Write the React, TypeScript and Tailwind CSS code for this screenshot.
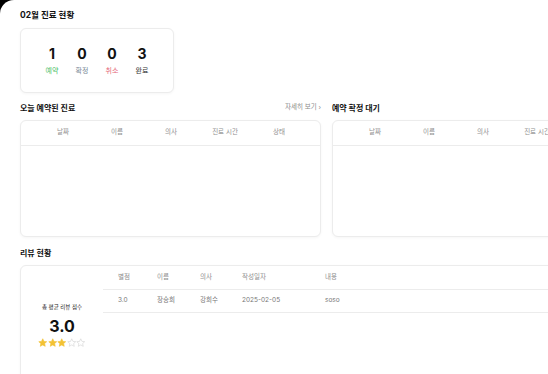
import React from 'react';

const font = { fontFamily: 'Inter, "Noto Sans CJK KR", sans-serif' };

const stats = [
  { value: 1, label: '예약', color: 'text-[#4fbf6b]' },
  { value: 0, label: '확정', color: 'text-[#7b8a98]' },
  { value: 0, label: '취소', color: 'text-[#e5687a]' },
  { value: 3, label: '완료', color: 'text-[#333333]' },
];

const Star: React.FC<{ filled: boolean }> = ({ filled }) => (
  <svg width="9.5" height="9.5" viewBox="0 0 24 24">
    <polygon
      points="12,2 15.1,8.6 22,9.3 16.8,14 18.2,21 12,17.5 5.8,21 7.2,14 2,9.3 8.9,8.6"
      fill={filled ? '#f3c234' : 'none'}
      stroke={filled ? '#f3c234' : '#d4d4d4'}
      strokeWidth="1.6"
      strokeLinejoin="round"
    />
  </svg>
);

const ScheduleCard: React.FC<{ columns: string[] }> = ({ columns }) => (
  <div className="h-[117px] rounded-[6px] border border-[#ececec] bg-white shadow-[0_1px_3px_rgba(0,0,0,0.04)]">
    <div className="flex h-[25px] items-center border-b border-[#ececec] pl-[15px] pr-[16px]">
      {columns.map((c) => (
        <div key={c} className="w-[54px] shrink-0 text-center text-[6.5px] text-[#8f8f8f]">
          {c}
        </div>
      ))}
    </div>
  </div>
);

const reviewCols = [
  { label: '별점', w: 'w-[39px]' },
  { label: '이름', w: 'w-[43px]' },
  { label: '의사', w: 'w-[42px]' },
  { label: '작성일자', w: 'w-[83px]' },
  { label: '내용', w: 'flex-1' },
];

const reviewRow = ['3.0', '장승희', '강희수', '2025-02-05', 'soso'];

export default function App() {
  return (
    <div className="h-[374px] w-[548px] overflow-hidden bg-black" style={font}>
      <div className="h-full w-[660px] rounded-tl-[14px] bg-white pl-[20px] pt-[9px] text-[#111]">
        <h2 className="text-[8.5px] font-bold leading-[13px]">02월 진료 현황</h2>

        <div className="mt-[6px] flex h-[65px] w-[154px] items-center justify-center rounded-[6px] border border-[#ececec] bg-white shadow-[0_1px_3px_rgba(0,0,0,0.04)]">
          {stats.map((s) => (
            <div key={s.label} className="flex w-[30px] flex-col items-center">
              <span className="text-[14px] font-bold leading-[16px] text-[#111]">{s.value}</span>
              <span className={`mt-[4px] text-[7px] leading-[10px] ${s.color}`}>{s.label}</span>
            </div>
          ))}
        </div>

        <div className="mt-[9px] flex gap-[11px]">
          <div className="w-[301px]">
            <div className="mb-[6px] flex h-[12px] items-center justify-between">
              <h3 className="text-[8px] font-bold">오늘 예약된 진료</h3>
              <span className="text-[6.5px] text-[#8a8a8a]">자세히 보기 ›</span>
            </div>
            <ScheduleCard columns={['날짜', '이름', '의사', '진료 시간', '상태']} />
          </div>
          <div className="w-[301px]">
            <div className="mb-[6px] flex h-[12px] items-center">
              <h3 className="text-[8px] font-bold">예약 확정 대기</h3>
            </div>
            <ScheduleCard columns={['날짜', '이름', '의사', '진료 시간', '상태']} />
          </div>
        </div>

        <h3 className="mt-[10px] flex h-[12px] items-center text-[8px] font-bold">리뷰 현황</h3>
        <div className="mt-[6px] flex h-[120px] w-[613px] rounded-[6px] border border-[#ececec] bg-white shadow-[0_1px_3px_rgba(0,0,0,0.04)]">
          <div className="flex w-[82px] shrink-0 flex-col items-center justify-center">
            <span className="text-[5.5px] leading-[8px] text-[#222]">총 평균 리뷰 점수</span>
            <span className="mt-[6px] text-[16px] font-bold leading-[18px] text-[#111]">3.0</span>
            <div className="mt-[3px] flex">
              {[0, 1, 2, 3, 4].map((i) => (
                <Star key={i} filled={i < 3} />
              ))}
            </div>
          </div>
          <div className="flex-1 pr-[15px]">
            <div className="flex h-[24px] items-center border-b border-[#ececec] pl-[15px]">
              {reviewCols.map((c) => (
                <div key={c.label} className={`${c.w} shrink-0 text-[6.5px] text-[#8f8f8f]`}>
                  {c.label}
                </div>
              ))}
            </div>
            <div className="flex h-[23px] items-center border-b border-[#ececec] pl-[15px]">
              {reviewRow.map((v, i) => (
                <div key={v} className={`${reviewCols[i].w} shrink-0 text-[6.5px] text-[#777]`}>
                  {v}
                </div>
              ))}
            </div>
          </div>
        </div>
      </div>
    </div>
  );
}
